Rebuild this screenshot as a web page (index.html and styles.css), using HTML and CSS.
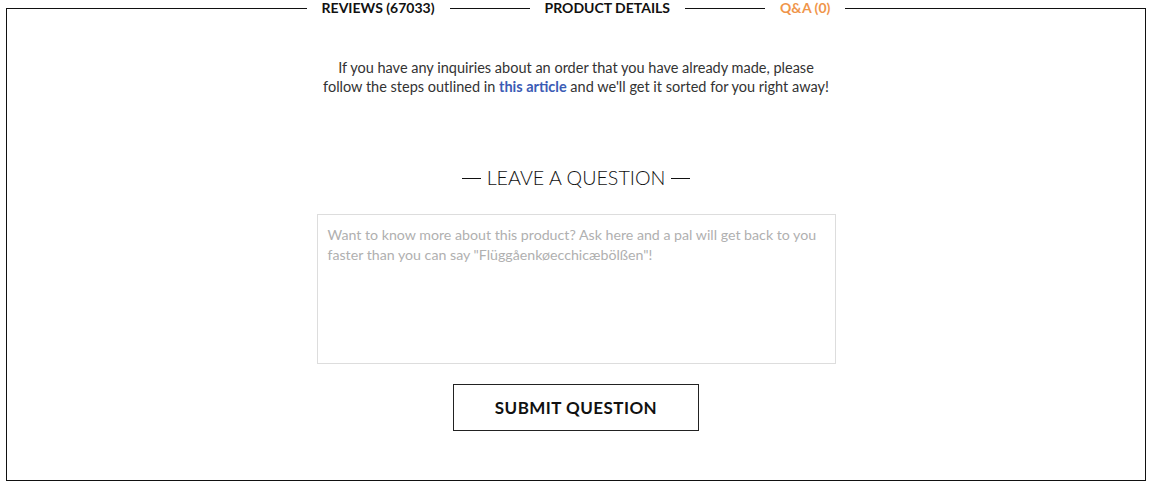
FILE: index.html
```html
<!DOCTYPE html>
<html>
<head>
<meta charset="utf-8">
<link rel="stylesheet" href="styles.css">
</head>
<body>
<div class="panel">
  <ul class="tabs">
    <li class="tab">REVIEWS (67033)</li>
    <li class="tab">PRODUCT DETAILS</li>
    <li class="tab active">Q&amp;A (0)</li>
  </ul>
  <p class="intro">If you have any inquiries about an order that you have already made, please<br>follow the steps outlined in <a href="#" class="link">this article</a> and we'll get it sorted for you right away!</p>
  <h2 class="heading"><span class="dash"></span>LEAVE A QUESTION<span class="dash"></span></h2>
  <textarea class="question" placeholder="Want to know more about this product? Ask here and a pal will get back to you faster than you can say &quot;Flüggåenkøecchicæbölßen&quot;!"></textarea>
  <button class="submit">SUBMIT QUESTION</button>
</div>
</body>
</html>
```
FILE: styles.css
```css
html, body { margin: 0; padding: 0; background: #fff; }
body { font-family: "Lato", "Liberation Sans", sans-serif; color: #222; }
.panel {
  margin: 8px 7px 0 6px;
  height: 473px;
  border: 1px solid #111;
  box-sizing: border-box;
  display: flex;
  flex-direction: column;
  align-items: center;
}
.tabs {
  list-style: none;
  margin: -10px 0 0 0;
  padding: 0;
  display: flex;
  gap: 80px;
}
.tab {
  background: #fff;
  padding: 0 15px;
  font-weight: 700;
  font-size: 14px;
  line-height: 18px;
  color: #111;
}
.tab.active { color: #f0954a; }
.intro {
  margin: 41px 0 0 0;
  text-align: center;
  font-size: 14.5px;
  line-height: 19px;
  color: #333;
}
.link { color: #3b5bb5; font-weight: 700; text-decoration: none; }
.heading {
  margin: 70px 0 0 0;
  display: flex;
  align-items: center;
  gap: 6px;
  font-weight: 300;
  font-size: 19.7px;
  line-height: 24px;
  color: #111;
}
.dash { display: block; width: 19px; height: 1px; background: #111; }
.question {
  margin-top: 24px;
  width: 519px;
  height: 150px;
  box-sizing: border-box;
  border: 1px solid #ddd;
  padding: 10px;
  resize: none;
  font-family: "Lato", "Liberation Sans", sans-serif;
  font-size: 14.2px;
  line-height: 20px;
  color: #333;
}
.question::placeholder { color: #b0b0b0; }
.submit {
  margin-top: 20px;
  width: 246px;
  height: 47px;
  background: #fff;
  border: 1px solid #222;
  font-family: "Lato", "Liberation Sans", sans-serif;
  font-weight: 700;
  font-size: 17px;
  letter-spacing: 0.45px;
  color: #111;
  cursor: pointer;
}
```
